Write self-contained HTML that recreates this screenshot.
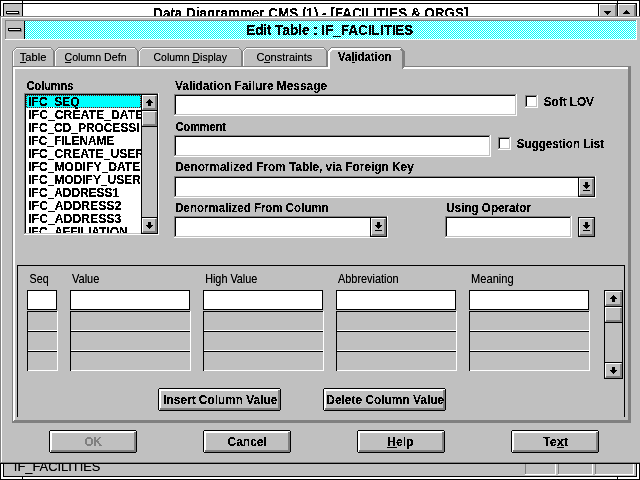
<!DOCTYPE html>
<html><head><meta charset="utf-8"><title>Edit Table : IF_FACILITIES</title>
<style>
html,body{margin:0;padding:0;width:640px;height:480px;overflow:hidden;background:#c0c0c0;}
svg{display:block;font-family:"Liberation Sans",sans-serif;}
</style></head><body>
<svg width="640" height="480" viewBox="0 0 640 480" shape-rendering="crispEdges">
<defs>
<pattern id="chk" x="0" y="0" width="2" height="2" patternUnits="userSpaceOnUse"><rect width="2" height="2" fill="#00ffff"/><rect x="1" y="0" width="1" height="1" fill="#ffffff"/><rect x="0" y="1" width="1" height="1" fill="#ffffff"/></pattern>
<pattern id="dotx" x="0" y="0" width="2" height="2" patternUnits="userSpaceOnUse"><rect x="0" y="0" width="1" height="1" fill="#800000"/><rect x="1" y="1" width="1" height="1" fill="#800000"/></pattern>
<filter id="crisp" x="0" y="0" width="640" height="480" filterUnits="userSpaceOnUse"><feComponentTransfer><feFuncA type="discrete" tableValues="0 1"/></feComponentTransfer></filter>
<filter id="crispu" x="0" y="0" width="640" height="480" filterUnits="userSpaceOnUse"><feComponentTransfer><feFuncA type="discrete" tableValues="0 0 0 0 1 1 1 1 1 1"/></feComponentTransfer></filter>
<filter id="crispn" x="0" y="0" width="640" height="480" filterUnits="userSpaceOnUse"><feComponentTransfer><feFuncA type="linear" slope="1.25" intercept="0"/></feComponentTransfer></filter>
<clipPath id="topclip"><rect x="23" y="4" width="575" height="12"/></clipPath>
<clipPath id="botclip"><rect x="4" y="464" width="520" height="12"/></clipPath>
<clipPath id="lbclip"><rect x="26" y="95" width="115" height="138"/></clipPath>
</defs>
<rect x="0" y="0" width="640" height="480" fill="#c0c0c0"/>
<rect x="0" y="0" width="640" height="1" fill="#000000"/>
<rect x="0" y="0" width="1" height="480" fill="#000000"/>
<rect x="639" y="0" width="1" height="480" fill="#000000"/>
<rect x="0" y="479" width="640" height="1" fill="#000000"/>
<rect x="1" y="1" width="638" height="2" fill="#ffffff"/>
<rect x="1" y="1" width="2" height="478" fill="#ffffff"/>
<rect x="637" y="1" width="2" height="478" fill="#ffffff"/>
<rect x="1" y="477" width="638" height="2" fill="#ffffff"/>
<rect x="3" y="3" width="634" height="1" fill="#000000"/>
<rect x="3" y="3" width="1" height="474" fill="#000000"/>
<rect x="636" y="3" width="1" height="474" fill="#000000"/>
<rect x="3" y="476" width="634" height="1" fill="#000000"/>
<rect x="22" y="0" width="1" height="4" fill="#000000"/>
<rect x="617" y="0" width="1" height="4" fill="#000000"/>
<rect x="22" y="476" width="1" height="4" fill="#000000"/>
<rect x="617" y="476" width="1" height="4" fill="#000000"/>
<rect x="4" y="4" width="18" height="12" fill="#c0c0c0"/>
<rect x="22" y="4" width="1" height="12" fill="#000000"/>
<rect x="23" y="4" width="575" height="12" fill="#ffffff"/>
<rect x="598" y="4" width="1" height="12" fill="#000000"/>
<rect x="6" y="11" width="13" height="3" fill="#000000"/>
<rect x="7" y="12" width="11" height="1" fill="#ffffff"/>
<rect x="19" y="12" width="1" height="3" fill="#808080"/>
<rect x="7" y="14" width="13" height="1" fill="#808080"/>
<rect x="599" y="4" width="18" height="12" fill="#c0c0c0"/>
<rect x="599" y="4" width="1" height="12" fill="#ffffff"/>
<rect x="599" y="4" width="17" height="1" fill="#ffffff"/>
<rect x="615" y="5" width="1" height="11" fill="#808080"/>
<rect x="616" y="4" width="1" height="12" fill="#808080"/>
<rect x="617" y="4" width="1" height="12" fill="#000000"/>
<rect x="618" y="4" width="18" height="12" fill="#c0c0c0"/>
<rect x="618" y="4" width="1" height="12" fill="#ffffff"/>
<rect x="618" y="4" width="17" height="1" fill="#ffffff"/>
<rect x="634" y="5" width="1" height="11" fill="#808080"/>
<rect x="635" y="4" width="1" height="12" fill="#808080"/>
<rect x="604" y="11" width="7" height="1" fill="#000000"/>
<rect x="626" y="10" width="1" height="1" fill="#000000"/>
<rect x="605" y="12" width="5" height="1" fill="#000000"/>
<rect x="625" y="11" width="3" height="1" fill="#000000"/>
<rect x="606" y="13" width="3" height="1" fill="#000000"/>
<rect x="624" y="12" width="5" height="1" fill="#000000"/>
<rect x="607" y="14" width="1" height="1" fill="#000000"/>
<rect x="623" y="13" width="7" height="1" fill="#000000"/>
<rect x="525" y="464" width="1" height="11" fill="#808080"/>
<rect x="555" y="464" width="1" height="11" fill="#ffffff"/>
<rect x="525" y="474" width="31" height="1" fill="#ffffff"/>
<rect x="558" y="464" width="1" height="11" fill="#808080"/>
<rect x="592" y="464" width="1" height="11" fill="#ffffff"/>
<rect x="558" y="474" width="35" height="1" fill="#ffffff"/>
<rect x="595" y="464" width="1" height="11" fill="#808080"/>
<rect x="633" y="464" width="1" height="11" fill="#ffffff"/>
<rect x="595" y="474" width="39" height="1" fill="#ffffff"/>
<rect x="0" y="16" width="640" height="448" fill="#c0c0c0"/>
<rect x="0" y="16" width="640" height="1" fill="#808080"/>
<rect x="0" y="16" width="1" height="447" fill="#808080"/>
<rect x="0" y="463" width="640" height="1" fill="#000000"/>
<rect x="1" y="17" width="639" height="1" fill="#ffffff"/>
<rect x="1" y="17" width="1" height="445" fill="#ffffff"/>
<rect x="1" y="462" width="639" height="1" fill="#808080"/>
<rect x="5" y="20" width="632" height="1" fill="#808080"/>
<rect x="5" y="20" width="1" height="20" fill="#808080"/>
<rect x="5" y="39" width="632" height="1" fill="#ffffff"/>
<rect x="636" y="20" width="1" height="20" fill="#ffffff"/>
<rect x="24" y="21" width="1" height="18" fill="#000000"/>
<rect x="25" y="21" width="611" height="18" fill="url(#chk)"/>
<rect x="8" y="28" width="13" height="3" fill="#000000"/>
<rect x="9" y="29" width="11" height="1" fill="#ffffff"/>
<rect x="21" y="29" width="1" height="3" fill="#808080"/>
<rect x="9" y="31" width="13" height="1" fill="#808080"/>
<rect x="16" y="47" width="35" height="1" fill="#808080"/>
<rect x="16" y="48" width="35" height="1" fill="#ffffff"/>
<rect x="15" y="48" width="1" height="1" fill="#808080"/>
<rect x="14" y="49" width="1" height="1" fill="#808080"/>
<rect x="13" y="50" width="1" height="1" fill="#808080"/>
<rect x="15" y="49" width="1" height="1" fill="#ffffff"/>
<rect x="14" y="50" width="1" height="1" fill="#ffffff"/>
<rect x="12" y="51" width="1" height="15" fill="#808080"/>
<rect x="13" y="51" width="1" height="15" fill="#ffffff"/>
<rect x="51" y="48" width="1" height="1" fill="#808080"/>
<rect x="52" y="49" width="1" height="1" fill="#808080"/>
<rect x="53" y="50" width="1" height="1" fill="#808080"/>
<rect x="53" y="51" width="1" height="15" fill="#808080"/>
<rect x="58" y="47" width="77" height="1" fill="#808080"/>
<rect x="58" y="48" width="77" height="1" fill="#ffffff"/>
<rect x="57" y="48" width="1" height="1" fill="#808080"/>
<rect x="56" y="49" width="1" height="1" fill="#808080"/>
<rect x="55" y="50" width="1" height="1" fill="#808080"/>
<rect x="57" y="49" width="1" height="1" fill="#ffffff"/>
<rect x="56" y="50" width="1" height="1" fill="#ffffff"/>
<rect x="54" y="51" width="1" height="15" fill="#808080"/>
<rect x="55" y="51" width="1" height="15" fill="#ffffff"/>
<rect x="135" y="48" width="1" height="1" fill="#808080"/>
<rect x="136" y="49" width="1" height="1" fill="#808080"/>
<rect x="137" y="50" width="1" height="1" fill="#808080"/>
<rect x="137" y="51" width="1" height="15" fill="#808080"/>
<rect x="142" y="47" width="97" height="1" fill="#808080"/>
<rect x="142" y="48" width="97" height="1" fill="#ffffff"/>
<rect x="141" y="48" width="1" height="1" fill="#808080"/>
<rect x="140" y="49" width="1" height="1" fill="#808080"/>
<rect x="139" y="50" width="1" height="1" fill="#808080"/>
<rect x="141" y="49" width="1" height="1" fill="#ffffff"/>
<rect x="140" y="50" width="1" height="1" fill="#ffffff"/>
<rect x="138" y="51" width="1" height="15" fill="#808080"/>
<rect x="139" y="51" width="1" height="15" fill="#ffffff"/>
<rect x="239" y="48" width="1" height="1" fill="#808080"/>
<rect x="240" y="49" width="1" height="1" fill="#808080"/>
<rect x="241" y="50" width="1" height="1" fill="#808080"/>
<rect x="241" y="51" width="1" height="15" fill="#808080"/>
<rect x="246" y="47" width="78" height="1" fill="#808080"/>
<rect x="246" y="48" width="78" height="1" fill="#ffffff"/>
<rect x="245" y="48" width="1" height="1" fill="#808080"/>
<rect x="244" y="49" width="1" height="1" fill="#808080"/>
<rect x="243" y="50" width="1" height="1" fill="#808080"/>
<rect x="245" y="49" width="1" height="1" fill="#ffffff"/>
<rect x="244" y="50" width="1" height="1" fill="#ffffff"/>
<rect x="242" y="51" width="1" height="15" fill="#808080"/>
<rect x="243" y="51" width="1" height="15" fill="#ffffff"/>
<rect x="324" y="48" width="1" height="1" fill="#808080"/>
<rect x="325" y="49" width="1" height="1" fill="#808080"/>
<rect x="326" y="50" width="1" height="1" fill="#808080"/>
<rect x="326" y="51" width="1" height="15" fill="#808080"/>
<rect x="12" y="66" width="619" height="1" fill="#808080"/>
<rect x="12" y="66" width="1" height="357" fill="#808080"/>
<rect x="630" y="66" width="1" height="357" fill="#808080"/>
<rect x="12" y="422" width="619" height="1" fill="#808080"/>
<rect x="13" y="67" width="616" height="2" fill="#ffffff"/>
<rect x="13" y="67" width="2" height="354" fill="#ffffff"/>
<rect x="628" y="67" width="2" height="355" fill="#808080"/>
<rect x="13" y="420" width="617" height="2" fill="#808080"/>
<rect x="13" y="420" width="1" height="1" fill="#ffffff"/>
<rect x="14" y="419" width="1" height="1" fill="#ffffff"/>
<rect x="331" y="47" width="70" height="1" fill="#808080"/>
<rect x="331" y="48" width="70" height="2" fill="#ffffff"/>
<rect x="330" y="48" width="1" height="1" fill="#808080"/>
<rect x="329" y="49" width="1" height="1" fill="#808080"/>
<rect x="328" y="50" width="1" height="1" fill="#808080"/>
<rect x="330" y="49" width="1" height="1" fill="#ffffff"/>
<rect x="329" y="50" width="1" height="1" fill="#ffffff"/>
<rect x="330" y="50" width="1" height="1" fill="#ffffff"/>
<rect x="327" y="51" width="1" height="16" fill="#808080"/>
<rect x="328" y="51" width="2" height="18" fill="#ffffff"/>
<rect x="330" y="51" width="1" height="1" fill="#ffffff"/>
<rect x="331" y="50" width="1" height="1" fill="#ffffff"/>
<rect x="330" y="66" width="72" height="3" fill="#c0c0c0"/>
<rect x="401" y="48" width="1" height="1" fill="#808080"/>
<rect x="400" y="49" width="1" height="1" fill="#808080"/>
<rect x="401" y="49" width="1" height="1" fill="#808080"/>
<rect x="402" y="49" width="1" height="1" fill="#808080"/>
<rect x="401" y="50" width="1" height="1" fill="#808080"/>
<rect x="402" y="50" width="1" height="1" fill="#808080"/>
<rect x="403" y="50" width="1" height="1" fill="#808080"/>
<rect x="402" y="51" width="3" height="16" fill="#808080"/>
<rect x="402" y="67" width="1" height="1" fill="#808080"/>
<rect x="403" y="67" width="1" height="1" fill="#808080"/>
<rect x="402" y="68" width="1" height="1" fill="#808080"/>
<rect x="24" y="93" width="134" height="1" fill="#808080"/>
<rect x="24" y="93" width="1" height="141" fill="#808080"/>
<rect x="24" y="234" width="135" height="1" fill="#ffffff"/>
<rect x="158" y="93" width="1" height="142" fill="#ffffff"/>
<rect x="25" y="94" width="133" height="1" fill="#000000"/>
<rect x="25" y="94" width="1" height="140" fill="#000000"/>
<rect x="25" y="233" width="116" height="1" fill="#c0c0c0"/>
<rect x="26" y="95" width="115" height="138" fill="#ffffff"/>
<rect x="26" y="95" width="115" height="13" fill="#00ffff"/>
<rect x="26" y="95" width="115" height="1" fill="url(#dotx)"/>
<rect x="26" y="107" width="115" height="1" fill="url(#dotx)"/>
<rect x="26" y="95" width="1" height="13" fill="url(#dotx)"/>
<rect x="140" y="95" width="1" height="13" fill="url(#dotx)"/>
<rect x="141" y="94" width="17" height="140" fill="#c0c0c0"/>
<rect x="141" y="94" width="1" height="140" fill="#000000"/>
<rect x="157" y="94" width="1" height="140" fill="#000000"/>
<rect x="141" y="94" width="17" height="1" fill="#000000"/>
<rect x="141" y="233" width="17" height="1" fill="#000000"/>
<rect x="142" y="95" width="15" height="15" fill="#c0c0c0"/>
<rect x="142" y="95" width="14" height="1" fill="#ffffff"/>
<rect x="142" y="95" width="1" height="14" fill="#ffffff"/>
<rect x="155" y="96" width="2" height="14" fill="#808080"/>
<rect x="143" y="108" width="14" height="2" fill="#808080"/>
<rect x="141" y="110" width="17" height="1" fill="#000000"/>
<rect x="149" y="99" width="1" height="1" fill="#000000"/>
<rect x="148" y="100" width="3" height="1" fill="#000000"/>
<rect x="147" y="101" width="5" height="1" fill="#000000"/>
<rect x="146" y="102" width="7" height="1" fill="#000000"/>
<rect x="148" y="103" width="3" height="3" fill="#000000"/>
<rect x="142" y="111" width="15" height="15" fill="#c0c0c0"/>
<rect x="142" y="111" width="14" height="1" fill="#ffffff"/>
<rect x="142" y="111" width="1" height="14" fill="#ffffff"/>
<rect x="155" y="112" width="2" height="14" fill="#808080"/>
<rect x="143" y="124" width="14" height="2" fill="#808080"/>
<rect x="141" y="126" width="17" height="1" fill="#000000"/>
<rect x="142" y="218" width="15" height="15" fill="#c0c0c0"/>
<rect x="142" y="218" width="14" height="1" fill="#ffffff"/>
<rect x="142" y="218" width="1" height="14" fill="#ffffff"/>
<rect x="155" y="219" width="2" height="14" fill="#808080"/>
<rect x="143" y="231" width="14" height="2" fill="#808080"/>
<rect x="141" y="217" width="17" height="1" fill="#000000"/>
<rect x="148" y="222" width="3" height="3" fill="#000000"/>
<rect x="146" y="225" width="7" height="1" fill="#000000"/>
<rect x="147" y="226" width="5" height="1" fill="#000000"/>
<rect x="148" y="227" width="3" height="1" fill="#000000"/>
<rect x="149" y="228" width="1" height="1" fill="#000000"/>
<rect x="174" y="94" width="342" height="1" fill="#808080"/>
<rect x="174" y="94" width="1" height="21" fill="#808080"/>
<rect x="174" y="115" width="343" height="1" fill="#ffffff"/>
<rect x="516" y="94" width="1" height="22" fill="#ffffff"/>
<rect x="175" y="95" width="340" height="1" fill="#000000"/>
<rect x="175" y="95" width="1" height="19" fill="#000000"/>
<rect x="175" y="114" width="341" height="1" fill="#c0c0c0"/>
<rect x="515" y="95" width="1" height="20" fill="#c0c0c0"/>
<rect x="176" y="96" width="339" height="18" fill="#ffffff"/>
<rect x="525" y="95" width="12" height="1" fill="#808080"/>
<rect x="525" y="95" width="1" height="12" fill="#808080"/>
<rect x="525" y="107" width="13" height="1" fill="#ffffff"/>
<rect x="537" y="95" width="1" height="13" fill="#ffffff"/>
<rect x="526" y="96" width="10" height="1" fill="#000000"/>
<rect x="526" y="96" width="1" height="10" fill="#000000"/>
<rect x="526" y="106" width="11" height="1" fill="#c0c0c0"/>
<rect x="536" y="96" width="1" height="11" fill="#c0c0c0"/>
<rect x="527" y="97" width="9" height="9" fill="#ffffff"/>
<rect x="174" y="135" width="316" height="1" fill="#808080"/>
<rect x="174" y="135" width="1" height="21" fill="#808080"/>
<rect x="174" y="156" width="317" height="1" fill="#ffffff"/>
<rect x="490" y="135" width="1" height="22" fill="#ffffff"/>
<rect x="175" y="136" width="314" height="1" fill="#000000"/>
<rect x="175" y="136" width="1" height="19" fill="#000000"/>
<rect x="175" y="155" width="315" height="1" fill="#c0c0c0"/>
<rect x="489" y="136" width="1" height="20" fill="#c0c0c0"/>
<rect x="176" y="137" width="313" height="18" fill="#ffffff"/>
<rect x="498" y="137" width="12" height="1" fill="#808080"/>
<rect x="498" y="137" width="1" height="12" fill="#808080"/>
<rect x="498" y="149" width="13" height="1" fill="#ffffff"/>
<rect x="510" y="137" width="1" height="13" fill="#ffffff"/>
<rect x="499" y="138" width="10" height="1" fill="#000000"/>
<rect x="499" y="138" width="1" height="10" fill="#000000"/>
<rect x="499" y="148" width="11" height="1" fill="#c0c0c0"/>
<rect x="509" y="138" width="1" height="11" fill="#c0c0c0"/>
<rect x="500" y="139" width="9" height="9" fill="#ffffff"/>
<rect x="174" y="176" width="421" height="1" fill="#808080"/>
<rect x="174" y="176" width="1" height="21" fill="#808080"/>
<rect x="174" y="197" width="422" height="1" fill="#ffffff"/>
<rect x="595" y="176" width="1" height="22" fill="#ffffff"/>
<rect x="175" y="177" width="419" height="1" fill="#000000"/>
<rect x="175" y="177" width="1" height="19" fill="#000000"/>
<rect x="175" y="196" width="420" height="1" fill="#c0c0c0"/>
<rect x="594" y="177" width="1" height="20" fill="#c0c0c0"/>
<rect x="176" y="178" width="418" height="18" fill="#ffffff"/>
<rect x="578" y="177" width="1" height="20" fill="#000000"/>
<rect x="594" y="177" width="1" height="20" fill="#000000"/>
<rect x="578" y="177" width="17" height="1" fill="#000000"/>
<rect x="578" y="196" width="17" height="1" fill="#000000"/>
<rect x="579" y="178" width="15" height="18" fill="#c0c0c0"/>
<rect x="579" y="178" width="14" height="1" fill="#ffffff"/>
<rect x="579" y="178" width="1" height="17" fill="#ffffff"/>
<rect x="592" y="179" width="2" height="17" fill="#808080"/>
<rect x="580" y="194" width="14" height="2" fill="#808080"/>
<rect x="585" y="182" width="3" height="3" fill="#000000"/>
<rect x="583" y="185" width="7" height="1" fill="#000000"/>
<rect x="584" y="186" width="5" height="1" fill="#000000"/>
<rect x="585" y="187" width="3" height="1" fill="#000000"/>
<rect x="586" y="188" width="1" height="1" fill="#000000"/>
<rect x="583" y="190" width="7" height="1" fill="#000000"/>
<rect x="174" y="216" width="213" height="1" fill="#808080"/>
<rect x="174" y="216" width="1" height="21" fill="#808080"/>
<rect x="174" y="237" width="214" height="1" fill="#ffffff"/>
<rect x="387" y="216" width="1" height="22" fill="#ffffff"/>
<rect x="175" y="217" width="211" height="1" fill="#000000"/>
<rect x="175" y="217" width="1" height="19" fill="#000000"/>
<rect x="175" y="236" width="212" height="1" fill="#c0c0c0"/>
<rect x="386" y="217" width="1" height="20" fill="#c0c0c0"/>
<rect x="176" y="218" width="210" height="18" fill="#ffffff"/>
<rect x="370" y="217" width="1" height="20" fill="#000000"/>
<rect x="386" y="217" width="1" height="20" fill="#000000"/>
<rect x="370" y="217" width="17" height="1" fill="#000000"/>
<rect x="370" y="236" width="17" height="1" fill="#000000"/>
<rect x="371" y="218" width="15" height="18" fill="#c0c0c0"/>
<rect x="371" y="218" width="14" height="1" fill="#ffffff"/>
<rect x="371" y="218" width="1" height="17" fill="#ffffff"/>
<rect x="384" y="219" width="2" height="17" fill="#808080"/>
<rect x="372" y="234" width="14" height="2" fill="#808080"/>
<rect x="377" y="222" width="3" height="3" fill="#000000"/>
<rect x="375" y="225" width="7" height="1" fill="#000000"/>
<rect x="376" y="226" width="5" height="1" fill="#000000"/>
<rect x="377" y="227" width="3" height="1" fill="#000000"/>
<rect x="378" y="228" width="1" height="1" fill="#000000"/>
<rect x="375" y="230" width="7" height="1" fill="#000000"/>
<rect x="445" y="216" width="126" height="1" fill="#808080"/>
<rect x="445" y="216" width="1" height="21" fill="#808080"/>
<rect x="445" y="237" width="127" height="1" fill="#ffffff"/>
<rect x="571" y="216" width="1" height="22" fill="#ffffff"/>
<rect x="446" y="217" width="124" height="1" fill="#000000"/>
<rect x="446" y="217" width="1" height="19" fill="#000000"/>
<rect x="446" y="236" width="125" height="1" fill="#c0c0c0"/>
<rect x="570" y="217" width="1" height="20" fill="#c0c0c0"/>
<rect x="447" y="218" width="123" height="18" fill="#ffffff"/>
<rect x="578" y="217" width="1" height="20" fill="#000000"/>
<rect x="594" y="217" width="1" height="20" fill="#000000"/>
<rect x="578" y="217" width="17" height="1" fill="#000000"/>
<rect x="578" y="236" width="17" height="1" fill="#000000"/>
<rect x="579" y="218" width="15" height="18" fill="#c0c0c0"/>
<rect x="579" y="218" width="14" height="1" fill="#ffffff"/>
<rect x="579" y="218" width="1" height="17" fill="#ffffff"/>
<rect x="592" y="219" width="2" height="17" fill="#808080"/>
<rect x="580" y="234" width="14" height="2" fill="#808080"/>
<rect x="585" y="222" width="3" height="3" fill="#000000"/>
<rect x="583" y="225" width="7" height="1" fill="#000000"/>
<rect x="584" y="226" width="5" height="1" fill="#000000"/>
<rect x="585" y="227" width="3" height="1" fill="#000000"/>
<rect x="586" y="228" width="1" height="1" fill="#000000"/>
<rect x="583" y="230" width="7" height="1" fill="#000000"/>
<rect x="17" y="265" width="608" height="1" fill="#000000"/>
<rect x="17" y="265" width="1" height="152" fill="#000000"/>
<rect x="624" y="265" width="1" height="152" fill="#000000"/>
<rect x="27" y="290" width="30" height="20" fill="#000000"/>
<rect x="28" y="291" width="28" height="18" fill="#ffffff"/>
<rect x="27" y="311" width="30" height="1" fill="#000000"/>
<rect x="27" y="311" width="1" height="20" fill="#000000"/>
<rect x="28" y="330" width="30" height="1" fill="#ffffff"/>
<rect x="57" y="311" width="1" height="20" fill="#ffffff"/>
<rect x="27" y="331" width="30" height="1" fill="#000000"/>
<rect x="27" y="331" width="1" height="20" fill="#000000"/>
<rect x="28" y="350" width="30" height="1" fill="#ffffff"/>
<rect x="57" y="331" width="1" height="20" fill="#ffffff"/>
<rect x="27" y="351" width="30" height="1" fill="#000000"/>
<rect x="27" y="351" width="1" height="20" fill="#000000"/>
<rect x="28" y="370" width="30" height="1" fill="#ffffff"/>
<rect x="57" y="351" width="1" height="20" fill="#ffffff"/>
<rect x="70" y="290" width="120" height="20" fill="#000000"/>
<rect x="71" y="291" width="118" height="18" fill="#ffffff"/>
<rect x="70" y="311" width="120" height="1" fill="#000000"/>
<rect x="70" y="311" width="1" height="20" fill="#000000"/>
<rect x="71" y="330" width="120" height="1" fill="#ffffff"/>
<rect x="190" y="311" width="1" height="20" fill="#ffffff"/>
<rect x="70" y="331" width="120" height="1" fill="#000000"/>
<rect x="70" y="331" width="1" height="20" fill="#000000"/>
<rect x="71" y="350" width="120" height="1" fill="#ffffff"/>
<rect x="190" y="331" width="1" height="20" fill="#ffffff"/>
<rect x="70" y="351" width="120" height="1" fill="#000000"/>
<rect x="70" y="351" width="1" height="20" fill="#000000"/>
<rect x="71" y="370" width="120" height="1" fill="#ffffff"/>
<rect x="190" y="351" width="1" height="20" fill="#ffffff"/>
<rect x="203" y="290" width="120" height="20" fill="#000000"/>
<rect x="204" y="291" width="118" height="18" fill="#ffffff"/>
<rect x="203" y="311" width="120" height="1" fill="#000000"/>
<rect x="203" y="311" width="1" height="20" fill="#000000"/>
<rect x="204" y="330" width="120" height="1" fill="#ffffff"/>
<rect x="323" y="311" width="1" height="20" fill="#ffffff"/>
<rect x="203" y="331" width="120" height="1" fill="#000000"/>
<rect x="203" y="331" width="1" height="20" fill="#000000"/>
<rect x="204" y="350" width="120" height="1" fill="#ffffff"/>
<rect x="323" y="331" width="1" height="20" fill="#ffffff"/>
<rect x="203" y="351" width="120" height="1" fill="#000000"/>
<rect x="203" y="351" width="1" height="20" fill="#000000"/>
<rect x="204" y="370" width="120" height="1" fill="#ffffff"/>
<rect x="323" y="351" width="1" height="20" fill="#ffffff"/>
<rect x="336" y="290" width="120" height="20" fill="#000000"/>
<rect x="337" y="291" width="118" height="18" fill="#ffffff"/>
<rect x="336" y="311" width="120" height="1" fill="#000000"/>
<rect x="336" y="311" width="1" height="20" fill="#000000"/>
<rect x="337" y="330" width="120" height="1" fill="#ffffff"/>
<rect x="456" y="311" width="1" height="20" fill="#ffffff"/>
<rect x="336" y="331" width="120" height="1" fill="#000000"/>
<rect x="336" y="331" width="1" height="20" fill="#000000"/>
<rect x="337" y="350" width="120" height="1" fill="#ffffff"/>
<rect x="456" y="331" width="1" height="20" fill="#ffffff"/>
<rect x="336" y="351" width="120" height="1" fill="#000000"/>
<rect x="336" y="351" width="1" height="20" fill="#000000"/>
<rect x="337" y="370" width="120" height="1" fill="#ffffff"/>
<rect x="456" y="351" width="1" height="20" fill="#ffffff"/>
<rect x="469" y="290" width="120" height="20" fill="#000000"/>
<rect x="470" y="291" width="118" height="18" fill="#ffffff"/>
<rect x="469" y="311" width="120" height="1" fill="#000000"/>
<rect x="469" y="311" width="1" height="20" fill="#000000"/>
<rect x="470" y="330" width="120" height="1" fill="#ffffff"/>
<rect x="589" y="311" width="1" height="20" fill="#ffffff"/>
<rect x="469" y="331" width="120" height="1" fill="#000000"/>
<rect x="469" y="331" width="1" height="20" fill="#000000"/>
<rect x="470" y="350" width="120" height="1" fill="#ffffff"/>
<rect x="589" y="331" width="1" height="20" fill="#ffffff"/>
<rect x="469" y="351" width="120" height="1" fill="#000000"/>
<rect x="469" y="351" width="1" height="20" fill="#000000"/>
<rect x="470" y="370" width="120" height="1" fill="#ffffff"/>
<rect x="589" y="351" width="1" height="20" fill="#ffffff"/>
<rect x="604" y="290" width="19" height="89" fill="#c0c0c0"/>
<rect x="604" y="290" width="1" height="89" fill="#000000"/>
<rect x="622" y="290" width="1" height="89" fill="#000000"/>
<rect x="604" y="290" width="19" height="1" fill="#000000"/>
<rect x="604" y="378" width="19" height="1" fill="#000000"/>
<rect x="605" y="291" width="17" height="15" fill="#c0c0c0"/>
<rect x="605" y="291" width="16" height="1" fill="#ffffff"/>
<rect x="605" y="291" width="1" height="14" fill="#ffffff"/>
<rect x="620" y="292" width="2" height="14" fill="#808080"/>
<rect x="606" y="304" width="16" height="2" fill="#808080"/>
<rect x="604" y="306" width="19" height="1" fill="#000000"/>
<rect x="613" y="295" width="1" height="1" fill="#000000"/>
<rect x="612" y="296" width="3" height="1" fill="#000000"/>
<rect x="611" y="297" width="5" height="1" fill="#000000"/>
<rect x="610" y="298" width="7" height="1" fill="#000000"/>
<rect x="612" y="299" width="3" height="3" fill="#000000"/>
<rect x="605" y="307" width="17" height="15" fill="#c0c0c0"/>
<rect x="605" y="307" width="16" height="1" fill="#ffffff"/>
<rect x="605" y="307" width="1" height="14" fill="#ffffff"/>
<rect x="620" y="308" width="2" height="14" fill="#808080"/>
<rect x="606" y="320" width="16" height="2" fill="#808080"/>
<rect x="604" y="322" width="19" height="1" fill="#000000"/>
<rect x="605" y="363" width="17" height="15" fill="#c0c0c0"/>
<rect x="605" y="363" width="16" height="1" fill="#ffffff"/>
<rect x="605" y="363" width="1" height="14" fill="#ffffff"/>
<rect x="620" y="364" width="2" height="14" fill="#808080"/>
<rect x="606" y="376" width="16" height="2" fill="#808080"/>
<rect x="604" y="362" width="19" height="1" fill="#000000"/>
<rect x="612" y="367" width="3" height="3" fill="#000000"/>
<rect x="610" y="370" width="7" height="1" fill="#000000"/>
<rect x="611" y="371" width="5" height="1" fill="#000000"/>
<rect x="612" y="372" width="3" height="1" fill="#000000"/>
<rect x="613" y="373" width="1" height="1" fill="#000000"/>
<rect x="158" y="388" width="123" height="23" fill="#c0c0c0"/>
<rect x="159" y="388" width="121" height="1" fill="#000000"/>
<rect x="159" y="410" width="121" height="1" fill="#000000"/>
<rect x="158" y="389" width="1" height="21" fill="#000000"/>
<rect x="280" y="389" width="1" height="21" fill="#000000"/>
<rect x="159" y="389" width="121" height="2" fill="#ffffff"/>
<rect x="159" y="389" width="2" height="21" fill="#ffffff"/>
<rect x="278" y="390" width="2" height="20" fill="#808080"/>
<rect x="160" y="408" width="120" height="2" fill="#808080"/>
<rect x="278" y="389" width="1" height="1" fill="#ffffff"/>
<rect x="159" y="409" width="1" height="1" fill="#ffffff"/>
<rect x="323" y="388" width="123" height="23" fill="#c0c0c0"/>
<rect x="324" y="388" width="121" height="1" fill="#000000"/>
<rect x="324" y="410" width="121" height="1" fill="#000000"/>
<rect x="323" y="389" width="1" height="21" fill="#000000"/>
<rect x="445" y="389" width="1" height="21" fill="#000000"/>
<rect x="324" y="389" width="121" height="2" fill="#ffffff"/>
<rect x="324" y="389" width="2" height="21" fill="#ffffff"/>
<rect x="443" y="390" width="2" height="20" fill="#808080"/>
<rect x="325" y="408" width="120" height="2" fill="#808080"/>
<rect x="443" y="389" width="1" height="1" fill="#ffffff"/>
<rect x="324" y="409" width="1" height="1" fill="#ffffff"/>
<rect x="49" y="430" width="88" height="23" fill="#c0c0c0"/>
<rect x="50" y="430" width="86" height="1" fill="#000000"/>
<rect x="50" y="452" width="86" height="1" fill="#000000"/>
<rect x="49" y="431" width="1" height="21" fill="#000000"/>
<rect x="136" y="431" width="1" height="21" fill="#000000"/>
<rect x="50" y="431" width="86" height="2" fill="#ffffff"/>
<rect x="50" y="431" width="2" height="21" fill="#ffffff"/>
<rect x="134" y="432" width="2" height="20" fill="#808080"/>
<rect x="51" y="450" width="85" height="2" fill="#808080"/>
<rect x="134" y="431" width="1" height="1" fill="#ffffff"/>
<rect x="50" y="451" width="1" height="1" fill="#ffffff"/>
<rect x="203" y="430" width="88" height="23" fill="#c0c0c0"/>
<rect x="204" y="430" width="86" height="1" fill="#000000"/>
<rect x="204" y="452" width="86" height="1" fill="#000000"/>
<rect x="203" y="431" width="1" height="21" fill="#000000"/>
<rect x="290" y="431" width="1" height="21" fill="#000000"/>
<rect x="204" y="431" width="86" height="2" fill="#ffffff"/>
<rect x="204" y="431" width="2" height="21" fill="#ffffff"/>
<rect x="288" y="432" width="2" height="20" fill="#808080"/>
<rect x="205" y="450" width="85" height="2" fill="#808080"/>
<rect x="288" y="431" width="1" height="1" fill="#ffffff"/>
<rect x="204" y="451" width="1" height="1" fill="#ffffff"/>
<rect x="357" y="430" width="88" height="23" fill="#c0c0c0"/>
<rect x="358" y="430" width="86" height="1" fill="#000000"/>
<rect x="358" y="452" width="86" height="1" fill="#000000"/>
<rect x="357" y="431" width="1" height="21" fill="#000000"/>
<rect x="444" y="431" width="1" height="21" fill="#000000"/>
<rect x="358" y="431" width="86" height="2" fill="#ffffff"/>
<rect x="358" y="431" width="2" height="21" fill="#ffffff"/>
<rect x="442" y="432" width="2" height="20" fill="#808080"/>
<rect x="359" y="450" width="85" height="2" fill="#808080"/>
<rect x="442" y="431" width="1" height="1" fill="#ffffff"/>
<rect x="358" y="451" width="1" height="1" fill="#ffffff"/>
<rect x="511" y="430" width="88" height="23" fill="#c0c0c0"/>
<rect x="512" y="430" width="86" height="1" fill="#000000"/>
<rect x="512" y="452" width="86" height="1" fill="#000000"/>
<rect x="511" y="431" width="1" height="21" fill="#000000"/>
<rect x="598" y="431" width="1" height="21" fill="#000000"/>
<rect x="512" y="431" width="86" height="2" fill="#ffffff"/>
<rect x="512" y="431" width="2" height="21" fill="#ffffff"/>
<rect x="596" y="432" width="2" height="20" fill="#808080"/>
<rect x="513" y="450" width="85" height="2" fill="#808080"/>
<rect x="596" y="431" width="1" height="1" fill="#ffffff"/>
<rect x="512" y="451" width="1" height="1" fill="#ffffff"/>
<g filter="url(#crisp)">
<g clip-path="url(#topclip)"><text transform="translate(153.19,18) scale(0.9612,1)" font-size="14" font-weight="bold" fill="#000000" stroke="#000000" stroke-width="0.15">Data Diagrammer CMS (1) - [FACILITIES &amp; ORGS]</text></g>
<text transform="translate(338.00,61) scale(0.8744,1)" font-size="13" font-weight="bold" fill="#000000" stroke="#000000" stroke-width="0.15">Validation</text><rect x="352" y="62" width="3" height="1" fill="#000000"/>
<text transform="translate(26.56,90) scale(0.8422,1)" font-size="13" font-weight="bold" fill="#000000" stroke="#000000" stroke-width="0.15">Columns</text>
<text transform="translate(175.00,90) scale(0.9166,1)" font-size="13" font-weight="bold" fill="#000000" stroke="#000000" stroke-width="0.15">Validation Failure Message</text>
<text transform="translate(543.77,106) scale(0.9028,1)" font-size="13" font-weight="bold" fill="#000000" stroke="#000000" stroke-width="0.15">Soft LOV</text>
<text transform="translate(175.56,131) scale(0.8419,1)" font-size="13" font-weight="bold" fill="#000000" stroke="#000000" stroke-width="0.15">Comment</text>
<text transform="translate(516.77,148) scale(0.8951,1)" font-size="13" font-weight="bold" fill="#000000" stroke="#000000" stroke-width="0.15">Suggestion List</text>
<text transform="translate(175.29,171) scale(0.9110,1)" font-size="13" font-weight="bold" fill="#000000" stroke="#000000" stroke-width="0.15">Denormalized From Table, via Foreign Key</text>
<text transform="translate(175.31,212) scale(0.8849,1)" font-size="13" font-weight="bold" fill="#000000" stroke="#000000" stroke-width="0.15">Denormalized From Column</text>
<text transform="translate(446.30,212) scale(0.8962,1)" font-size="13" font-weight="bold" fill="#000000" stroke="#000000" stroke-width="0.15">Using Operator</text>
<text transform="translate(163.29,404) scale(0.9124,1)" font-size="13" font-weight="bold" fill="#000000" stroke="#000000" stroke-width="0.15">Insert Column Value</text>
<text transform="translate(326.28,404) scale(0.9179,1)" font-size="13" font-weight="bold" fill="#000000" stroke="#000000" stroke-width="0.15">Delete Column Value</text>
<text transform="translate(84.53,446) scale(0.8970,1)" font-size="13" font-weight="bold" fill="#808080" stroke="#808080" stroke-width="0.15">OK</text>
<text transform="translate(227.52,446) scale(0.9217,1)" font-size="13" font-weight="bold" fill="#000000" stroke="#000000" stroke-width="0.15">Cancel</text>
<text transform="translate(387.27,446) scale(0.9308,1)" font-size="13" font-weight="bold" fill="#000000" stroke="#000000" stroke-width="0.15">Help</text><rect x="387" y="447" width="10" height="1" fill="#000000"/>
<text transform="translate(542.87,446) scale(0.9767,1)" font-size="13" font-weight="bold" fill="#000000" stroke="#000000" stroke-width="0.15">Text</text><rect x="557" y="447" width="7" height="1" fill="#000000"/>
</g>
<g filter="url(#crispu)">
<text transform="translate(246.19,35) scale(0.9617,1)" font-size="14" font-weight="bold" fill="#000000">Edit Table : IF_FACILITIES</text>
<g clip-path="url(#lbclip)"><text transform="translate(28.28,106) scale(0.9199,1)" font-size="13" font-weight="bold" fill="#000000">IFC_SEQ</text></g>
<g clip-path="url(#lbclip)"><text transform="translate(28.27,119) scale(0.9418,1)" font-size="13" font-weight="bold" fill="#000000">IFC_CREATE_DATE</text></g>
<g clip-path="url(#lbclip)"><text transform="translate(28.28,132) scale(0.9180,1)" font-size="13" font-weight="bold" fill="#000000">IFC_CD_PROCESSI</text></g>
<g clip-path="url(#lbclip)"><text transform="translate(28.29,145) scale(0.9105,1)" font-size="13" font-weight="bold" fill="#000000">IFC_FILENAME</text></g>
<g clip-path="url(#lbclip)"><text transform="translate(28.27,158) scale(0.9351,1)" font-size="13" font-weight="bold" fill="#000000">IFC_CREATE_USER</text></g>
<g clip-path="url(#lbclip)"><text transform="translate(28.27,171) scale(0.9319,1)" font-size="13" font-weight="bold" fill="#000000">IFC_MODIFY_DATE</text></g>
<g clip-path="url(#lbclip)"><text transform="translate(28.28,184) scale(0.9244,1)" font-size="13" font-weight="bold" fill="#000000">IFC_MODIFY_USER</text></g>
<g clip-path="url(#lbclip)"><text transform="translate(28.28,197) scale(0.9198,1)" font-size="13" font-weight="bold" fill="#000000">IFC_ADDRESS1</text></g>
<g clip-path="url(#lbclip)"><text transform="translate(28.27,210) scale(0.9415,1)" font-size="13" font-weight="bold" fill="#000000">IFC_ADDRESS2</text></g>
<g clip-path="url(#lbclip)"><text transform="translate(28.27,223) scale(0.9415,1)" font-size="13" font-weight="bold" fill="#000000">IFC_ADDRESS3</text></g>
<g clip-path="url(#lbclip)"><text transform="translate(28.28,236) scale(0.9202,1)" font-size="13" font-weight="bold" fill="#000000">IFC_AFFILIATION</text></g>
</g>
<g filter="url(#crispn)">
<g clip-path="url(#botclip)"><text transform="translate(13.84,471) scale(1.0737,1)" font-size="12" font-weight="normal" fill="#000000">IF_FACILITIES</text></g>
<text transform="translate(19.78,61) scale(0.9685,1)" font-size="11.5" font-weight="normal" fill="#000000">Table</text><rect x="20" y="62" width="6" height="1" fill="#000000"/>
<text transform="translate(64.47,61) scale(0.9257,1)" font-size="11.5" font-weight="normal" fill="#000000">Column Defn</text><rect x="65" y="62" width="6" height="1" fill="#000000"/>
<text transform="translate(153.48,61) scale(0.9130,1)" font-size="11.5" font-weight="normal" fill="#000000">Column Display</text><rect x="192" y="62" width="7" height="1" fill="#000000"/>
<text transform="translate(256.45,61) scale(0.9608,1)" font-size="11.5" font-weight="normal" fill="#000000">Constraints</text><rect x="264" y="62" width="6" height="1" fill="#000000"/>
<text transform="translate(29.57,283) scale(0.8912,1)" font-size="12" font-weight="normal" fill="#000000">Seq</text>
<text transform="translate(72.00,283) scale(0.9194,1)" font-size="12" font-weight="normal" fill="#000000">Value</text>
<text transform="translate(205.13,283) scale(0.9039,1)" font-size="12" font-weight="normal" fill="#000000">High Value</text>
<text transform="translate(338.00,283) scale(0.9086,1)" font-size="12" font-weight="normal" fill="#000000">Abbreviation</text>
<text transform="translate(471.11,283) scale(0.9235,1)" font-size="12" font-weight="normal" fill="#000000">Meaning</text>
</g>
<rect x="47" y="107" width="1" height="1" fill="#ffffff"/><rect x="48" y="107" width="1" height="1" fill="#000000"/><rect x="49" y="107" width="1" height="1" fill="#ffffff"/><rect x="50" y="107" width="1" height="1" fill="#000000"/><rect x="51" y="107" width="1" height="1" fill="#ffffff"/><rect x="52" y="107" width="1" height="1" fill="#000000"/><rect x="53" y="107" width="1" height="1" fill="#ffffff"/>
</svg>
</body></html>
